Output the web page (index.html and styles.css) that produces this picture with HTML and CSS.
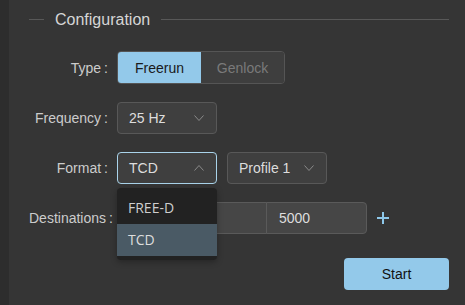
FILE: index.html
```html
<!DOCTYPE html>
<html lang="en">
<head>
  <meta charset="UTF-8">
  <meta name="viewport" content="width=device-width, initial-scale=1.0">
  <title>Configuration</title>
  <link rel="stylesheet" href="styles.css">
</head>
<body>

<div class="app">
  <div class="sidebar"></div>
  <div class="panel">
    <div class="legend">
      <span class="legend-line short"></span>
      <span class="legend-title">Configuration</span>
      <span class="legend-line"></span>
    </div>

    <div class="row row-type">
      <label class="field-label">Type<span class="colon">:</span></label>
      <div class="toggle">
        <button class="toggle-btn active">Freerun</button>
        <button class="toggle-btn">Genlock</button>
      </div>
    </div>

    <div class="row">
      <label class="field-label">Frequency<span class="colon">:</span></label>
      <div class="select">
        <span class="select-value">25 Hz</span>
        <svg class="chevron" width="10" height="6" viewBox="0 0 10 6"><path d="M0.5 0.5 L5 5.5 L9.5 0.5" fill="none" stroke="#8a8a8a" stroke-width="1"/></svg>
      </div>
    </div>

    <div class="row">
      <label class="field-label">Format<span class="colon">:</span></label>
      <div class="select focused">
        <span class="select-value">TCD</span>
        <svg class="chevron" width="10" height="6" viewBox="0 0 10 6"><path d="M0.5 5.5 L5 0.5 L9.5 5.5" fill="none" stroke="#8a8a8a" stroke-width="1"/></svg>
        <ul class="dropdown">
          <li class="dropdown-item">FREE-D</li>
          <li class="dropdown-item selected">TCD</li>
        </ul>
      </div>
      <div class="select profile">
        <span class="select-value">Profile 1</span>
        <svg class="chevron" width="10" height="6" viewBox="0 0 10 6"><path d="M0.5 0.5 L5 5.5 L9.5 0.5" fill="none" stroke="#8a8a8a" stroke-width="1"/></svg>
      </div>
    </div>

    <div class="row">
      <label class="field-label">Destinations<span class="colon">:</span></label>
      <input type="text" class="text-input ip" value="">
      <input type="text" class="text-input port" value="5000">
      <svg class="add-icon" width="12" height="12" viewBox="0 0 12 12"><path d="M6 0 V12 M0 6 H12" stroke="#8ec8ea" stroke-width="2"/></svg>
    </div>

    <div class="row actions">
      <button class="start-btn">Start</button>
    </div>
  </div>
</div>

</body>
</html>
```

FILE: styles.css
```css
body {
  margin: 0;
  padding: 0;
  background-color: #353535;
  font-family: "Liberation Sans", Arial, sans-serif;
  font-size: 14px;
  color: #cfcfcf;
}
.app {
  display: flex;
  height: 305px;
}
.sidebar {
  width: 9px;
  background-color: #2d2d2d;
}
.panel {
  flex: 1;
  padding: 9px 16px 0 20px;
}
.legend {
  display: flex;
  align-items: center;
  height: 20px;
  margin-bottom: 22px;
}
.legend-line {
  flex: 1;
  height: 1px;
  background-color: #585858;
}
.legend-line.short {
  flex: none;
  width: 15px;
}
.legend-title {
  font-size: 16px;
  color: #d6d6d6;
  margin: 1px 11px 0 11px;
}
.row {
  display: flex;
  align-items: center;
  height: 32px;
  margin-bottom: 18px;
}
.row-type {
  height: 33px;
}
.field-label {
  width: 79px;
  margin-right: 9px;
  text-align: right;
  color: #cccccc;
  white-space: nowrap;
}
.colon {
  margin-left: 3px;
}
.toggle {
  display: flex;
  height: 33px;
  border: 1px solid #555;
  border-radius: 4px;
  overflow: hidden;
  box-sizing: border-box;
}
.toggle-btn {
  width: 83px;
  border: none;
  background-color: #3e3e3e;
  color: #7a7a7a;
  font-family: inherit;
  font-size: 14px;
  padding: 0;
}
.toggle-btn.active {
  background-color: #93c9ea;
  color: #1a1a1a;
}
.select {
  position: relative;
  display: flex;
  align-items: center;
  justify-content: space-between;
  width: 100px;
  height: 32px;
  box-sizing: border-box;
  padding: 0 12px 0 11px;
  background-color: #3f3f3f;
  border: 1px solid #585858;
  border-radius: 4px;
  color: #dddddd;
}
.select.focused {
  border-color: #a9d3ea;
}
.select.profile {
  margin-left: 10px;
}
.dropdown {
  position: absolute;
  top: 35px;
  left: -1px;
  width: 100px;
  margin: 0;
  padding: 4px 0;
  list-style: none;
  background-color: #222222;
  border-radius: 4px;
  box-shadow: 0 2px 6px rgba(0, 0, 0, 0.3);
  z-index: 2;
}
.dropdown-item {
  height: 32px;
  line-height: 32px;
  padding-left: 11px;
  font-family: "Open Sans", "Noto Sans", sans-serif;
  font-size: 14px;
  color: #cfcfcf;
}
.dropdown-item.selected {
  background-color: #4a5a65;
  color: #dddddd;
}
.text-input {
  height: 32px;
  box-sizing: border-box;
  background-color: #464646;
  border: 1px solid #5a5a5a;
  color: #dddddd;
  font-family: inherit;
  font-size: 14px;
  padding: 0 12px;
  outline: none;
}
.text-input.ip {
  width: 150px;
  border-radius: 4px 0 0 4px;
}
.text-input.port {
  width: 101px;
  margin-left: -1px;
  border-radius: 0 4px 4px 0;
}
.add-icon {
  margin-left: 10px;
}
.actions {
  justify-content: flex-end;
  margin-top: 24px;
}
.start-btn {
  width: 105px;
  height: 32px;
  border: none;
  border-radius: 4px;
  background-color: #93c9ea;
  color: #111111;
  font-family: inherit;
  font-size: 14px;
}
```
